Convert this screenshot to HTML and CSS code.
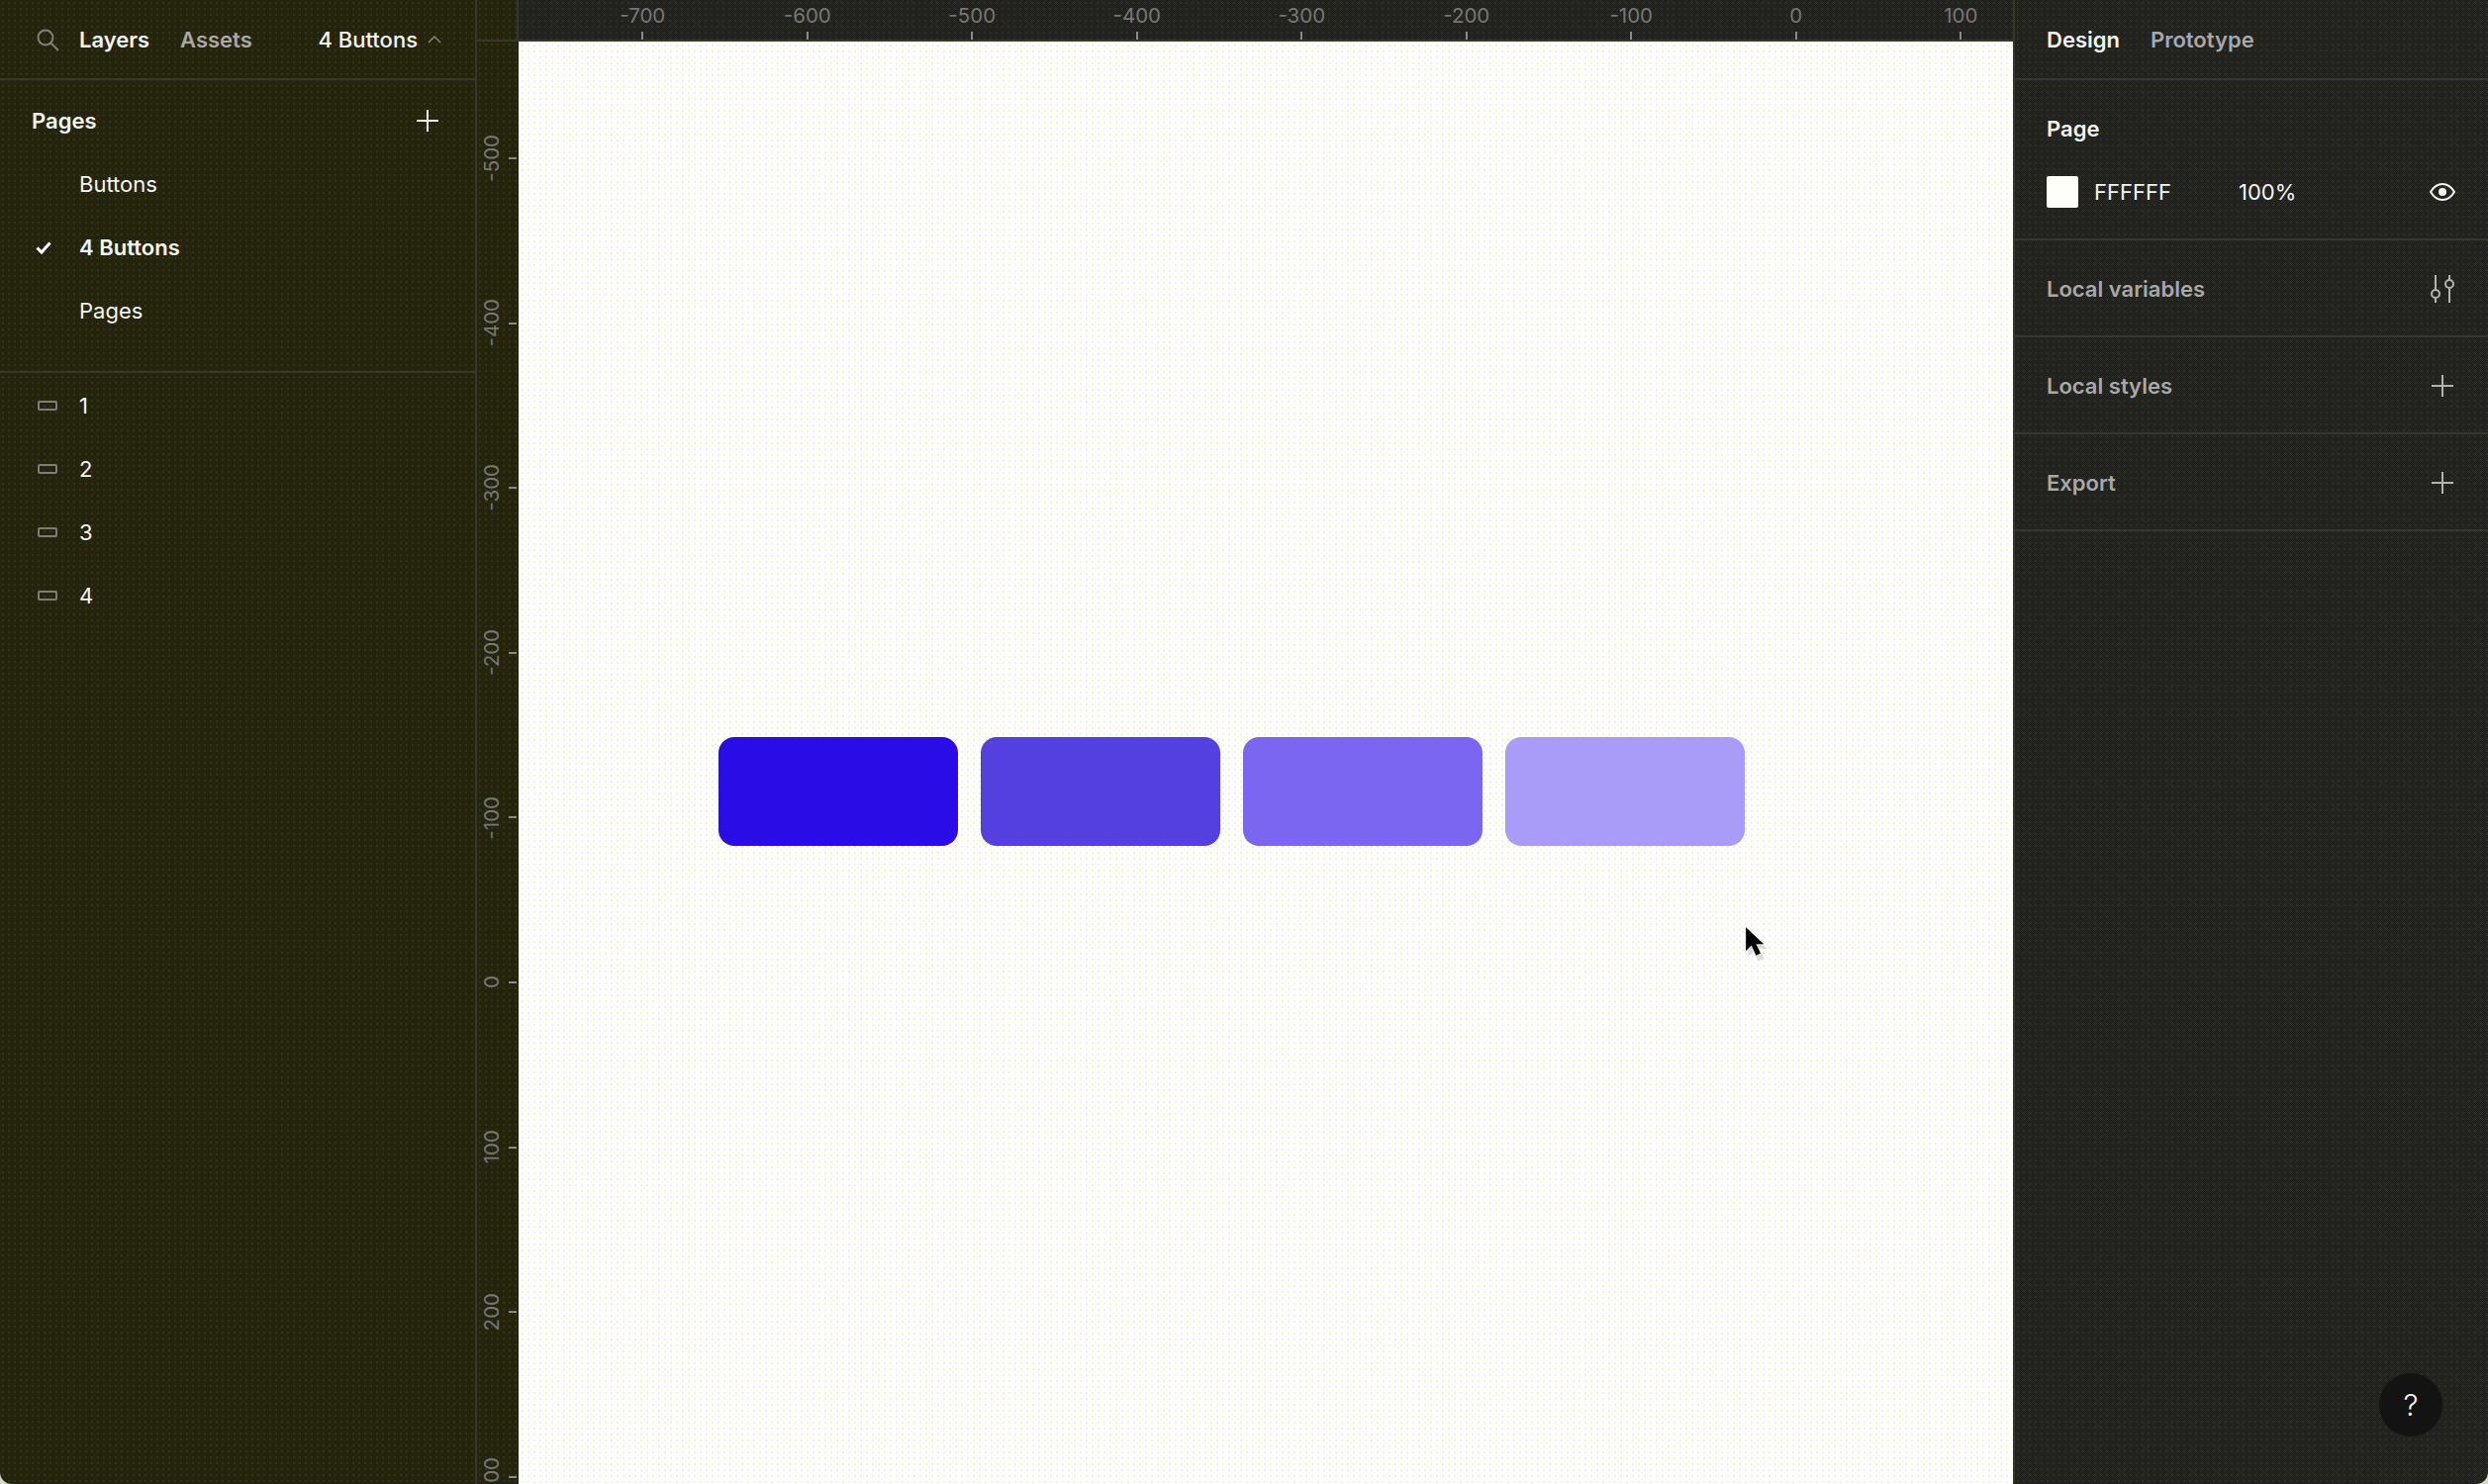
FILE: index.html
```html
<!DOCTYPE html>
<html lang="en">
<head>
    <meta charset="UTF-8">
    <title>4 Buttons - Figma</title>
    <link rel="stylesheet" href="styles.css">
</head>
<body>
    <div class="app">
        <aside class="left-panel">
            <div class="tabs">
                <svg class="icon-search" width="24" height="24" viewBox="0 0 24 24" fill="none" stroke="#7f7f7f" stroke-width="2"><circle cx="10" cy="10" r="7.5"/><path d="M15.5 15.5 23 23"/></svg>
                <span class="tab active">Layers</span>
                <span class="tab muted">Assets</span>
                <span class="page-switch">4 Buttons
                    <svg width="14" height="8" viewBox="0 0 14 8" fill="none" stroke="#7f7f7f" stroke-width="1.6"><path d="M1 7l6-6 6 6"/></svg>
                </span>
            </div>
            <section class="pages">
                <div class="pages-head">
                    <span class="title">Pages</span>
                    <svg width="22" height="22" viewBox="0 0 22 22" stroke="#f2f2f2" stroke-width="2"><path d="M11 0v22M0 11h22"/></svg>
                </div>
                <div class="row"><span class="row-icon"></span>Buttons</div>
                <div class="row current">
                    <span class="row-icon">
                        <svg width="16" height="13" viewBox="0 0 16 13" fill="none" stroke="#fff" stroke-width="3"><path d="M1.5 6.5 6 11 14.5 1.5"/></svg>
                    </span>4 Buttons
                </div>
                <div class="row"><span class="row-icon"></span>Pages</div>
            </section>
            <section class="layers">
                <div class="row"><span class="row-icon"><span class="rect-icon"></span></span>1</div>
                <div class="row"><span class="row-icon"><span class="rect-icon"></span></span>2</div>
                <div class="row"><span class="row-icon"><span class="rect-icon"></span></span>3</div>
                <div class="row"><span class="row-icon"><span class="rect-icon"></span></span>4</div>
            </section>
        </aside>

        <main class="stage">
            <div class="corner"></div>
            <div class="ruler-top">
                <div class="tick-x"><span>-700</span><i></i></div>
                <div class="tick-x"><span>-600</span><i></i></div>
                <div class="tick-x"><span>-500</span><i></i></div>
                <div class="tick-x"><span>-400</span><i></i></div>
                <div class="tick-x"><span>-300</span><i></i></div>
                <div class="tick-x"><span>-200</span><i></i></div>
                <div class="tick-x"><span>-100</span><i></i></div>
                <div class="tick-x"><span>0</span><i></i></div>
                <div class="tick-x"><span>100</span><i></i></div>
            </div>
            <div class="ruler-left">
                <div class="tick-y"><span>-500</span><i></i></div>
                <div class="tick-y"><span>-400</span><i></i></div>
                <div class="tick-y"><span>-300</span><i></i></div>
                <div class="tick-y"><span>-200</span><i></i></div>
                <div class="tick-y"><span>-100</span><i></i></div>
                <div class="tick-y"><span>0</span><i></i></div>
                <div class="tick-y"><span>100</span><i></i></div>
                <div class="tick-y"><span>200</span><i></i></div>
                <div class="tick-y"><span>300</span><i></i></div>
            </div>
            <div class="canvas">
                <div class="shapes">
                    <div class="shape shape-1"></div>
                    <div class="shape shape-2"></div>
                    <div class="shape shape-3"></div>
                    <div class="shape shape-4"></div>
                </div>
                <svg class="cursor" width="25" height="39" viewBox="0 0 22 34">
                    <path d="M3 5v22l5-5 4 9 5-2-4-9h7z" fill="#bbb" opacity=".5"/>
                    <path d="M1 1v21l5-5 4 9 4-2-4-8h7z" fill="#000"/>
                </svg>
            </div>
        </main>

        <aside class="right-panel">
            <div class="tabs tabs-right">
                <span class="tab active">Design</span>
                <span class="tab muted">Prototype</span>
            </div>
            <section class="page-props">
                <div class="title">Page</div>
                <div class="fill-row">
                    <span class="swatch"></span>
                    <span class="fill-hex">FFFFFF</span>
                    <span class="fill-opacity">100%</span>
                    <svg width="26" height="18" viewBox="0 0 26 18" fill="none" stroke="#f2f2f2" stroke-width="2"><path d="M1 9c3-5 7-8 12-8s9 3 12 8c-3 5-7 8-12 8S4 14 1 9z"/><circle cx="13" cy="9" r="4" fill="#f2f2f2" stroke="none"/></svg>
                </div>
            </section>
            <section class="prop-row">
                <span class="title muted">Local variables</span>
                <svg class="icon-vars" width="24" height="28" viewBox="0 0 24 28" fill="none" stroke="#b3b3b3" stroke-width="2"><path d="M5 0v14M5 24v4M19 0v4M19 14v14"/><circle cx="5" cy="19" r="4"/><circle cx="19" cy="9" r="4"/></svg>
            </section>
            <section class="prop-row">
                <span class="title muted">Local styles</span>
                <svg width="22" height="22" viewBox="0 0 22 22" stroke="#b3b3b3" stroke-width="2"><path d="M11 0v22M0 11h22"/></svg>
            </section>
            <section class="prop-row">
                <span class="title muted">Export</span>
                <svg width="22" height="22" viewBox="0 0 22 22" stroke="#b3b3b3" stroke-width="2"><path d="M11 0v22M0 11h22"/></svg>
            </section>
            <div class="help">?</div>
        </aside>
    </div>
</body>
</html>
```

FILE: styles.css
```css
* {
    box-sizing: border-box;
}

html, body {
    height: 100%;
}

body {
    margin: 0;
    overflow: hidden;
    background: #d9d9ce;
    font-family: Inter, "Noto Sans", sans-serif;
    font-size: 22px;
    color: #f4f4f4;
}

.app {
    display: flex;
    height: 1500px;
    border-radius: 0 0 12px 12px;
    overflow: hidden;
}

/* the source is a gif, so the dark panels carry its dither */
.left-panel,
.ruler-left,
.corner {
    background:
        radial-gradient(circle at 3px 3px, rgba(255, 255, 255, 0.07) 0.8px, transparent 1.1px) 0 0 / 6px 6px,
        repeating-conic-gradient(#1c1c34 0 25%, #27270f 0 50%) 0 0 / 2px 2px;
}

.right-panel,
.ruler-top {
    background:
        radial-gradient(circle at 3px 3px, rgba(255, 255, 255, 0.05) 0.8px, transparent 1.1px) 0 0 / 6px 6px,
        repeating-conic-gradient(#1c1c1c 0 25%, #282825 0 50%) 0 0 / 2px 2px;
}

.left-panel {
    width: 482px;
    flex: none;
    border-right: 2px solid #38372c;
}

.tabs {
    display: flex;
    align-items: center;
    height: 81px;
    padding-left: 36px;
    border-bottom: 2px solid #38372c;
}

.tabs-right {
    padding-left: 32px;
    gap: 31px;
}

.icon-search {
    margin-right: 20px;
}

.tab {
    font-weight: 600;
}

.left-panel .tab.muted {
    margin-left: 31px;
}

.muted {
    color: #a8a8a8;
}

.page-switch {
    display: flex;
    align-items: center;
    gap: 10px;
    margin-left: auto;
    margin-right: 34px;
    font-weight: 500;
}

.title {
    font-weight: 600;
}

.pages {
    height: 296px;
    padding-top: 9px;
    border-bottom: 2px solid #38372c;
}

.pages-head {
    display: flex;
    align-items: center;
    justify-content: space-between;
    height: 64px;
    padding: 0 37px 0 32px;
}

.row {
    display: flex;
    align-items: center;
    height: 64px;
}

.row-icon {
    display: flex;
    align-items: center;
    width: 80px;
    padding-left: 36px;
}

.row.current {
    font-weight: 600;
}

.layers {
    padding-top: 1px;
}

.rect-icon {
    width: 20px;
    height: 10px;
    margin-left: 2px;
    border: 2px solid #7c7c7c;
    border-radius: 2px;
}

.stage {
    flex: 1;
    display: grid;
    grid-template-columns: 42px 1fr;
    grid-template-rows: 42px 1fr;
    min-width: 0;
}

.corner {
    border-right: 2px solid #38372c;
    border-bottom: 2px solid #38372c;
}

.ruler-top {
    display: flex;
    padding-left: 42px;
    overflow: hidden;
    border-bottom: 2px solid #38372c;
}

.tick-x {
    flex: none;
    width: 166.5px;
    display: flex;
    flex-direction: column;
    align-items: center;
    height: 40px;
    font-size: 20.5px;
    color: #777;
}

.tick-x span {
    height: 32px;
    line-height: 31px;
}

.tick-x i {
    width: 2px;
    height: 8px;
    background: #8a8a8a;
}

.ruler-left {
    display: flex;
    flex-direction: column;
    padding-top: 34.7px;
    overflow: hidden;
}

.tick-y {
    flex: none;
    height: 166.6px;
    display: flex;
    align-items: center;
    justify-content: flex-end;
    gap: 6px;
    padding-right: 2px;
    font-size: 20.5px;
    color: #777;
}

.tick-y span {
    writing-mode: vertical-rl;
    transform: rotate(180deg);
    line-height: 22px;
}

.tick-y i {
    width: 8px;
    height: 2px;
    background: #8a8a8a;
}

.canvas {
    position: relative;
    display: flex;
    justify-content: flex-start;
    padding: 703px 0 0 202px;
    background:
        radial-gradient(circle at 1px 1px, #fffbc8 0.6px, transparent 0.9px) 0 0 / 6px 6px,
        radial-gradient(circle at 4px 4px, #e2e2ff 0.6px, transparent 0.9px) 0 0 / 6px 6px,
        #fffffe;
}

.shapes {
    display: flex;
    gap: 23px;
}

.shape {
    width: 242px;
    height: 110px;
    border-radius: 16px;
}

.shape-1 { background: #2a0ce6; }
.shape-2 { background: #5440de; }
.shape-3 { background: #7a66f0; }
.shape-4 { background: #a99cf8; }

.cursor {
    position: absolute;
    left: 1239px;
    top: 894px;
}

.right-panel {
    position: relative;
    flex: none;
    width: 480px;
    border-left: 2px solid #38372c;
}

.page-props {
    height: 162px;
    padding: 30px 33px 0 32px;
    border-bottom: 2px solid #38372c;
}

.page-props .title {
    line-height: 38px;
}

.fill-row {
    display: flex;
    align-items: center;
    margin-top: 29px;
    height: 32px;
}

.swatch {
    width: 32px;
    height: 32px;
    border-radius: 2px;
    background: #fffffa;
}

.fill-hex {
    width: 146px;
    margin-left: 16px;
}

.fill-opacity {
    flex: 1;
}

.prop-row {
    display: flex;
    align-items: center;
    justify-content: space-between;
    height: 98px;
    padding: 1px 35px 0 32px;
    border-bottom: 2px solid #38372c;
}

.icon-vars {
    margin-right: -1px;
}

.help {
    position: absolute;
    right: 46px;
    bottom: 48px;
    width: 64px;
    height: 64px;
    border-radius: 50%;
    background: #131313;
    font-size: 30px;
    font-weight: 300;
    line-height: 64px;
    text-align: center;
}
```
